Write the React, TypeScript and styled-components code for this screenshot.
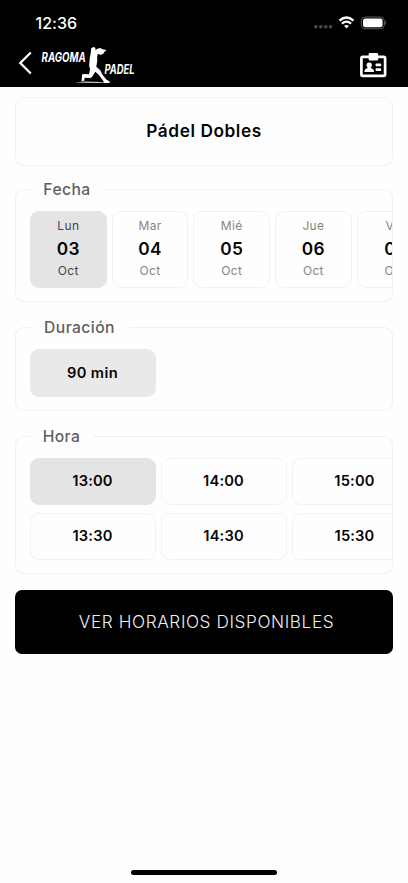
import React from "react";
import styled, { createGlobalStyle } from "styled-components";

const GlobalStyle = createGlobalStyle`
  * { box-sizing: border-box; }
  body { margin: 0; background: #fefefe; overflow: hidden; }
  button { font: inherit; color: inherit; }
`;

const Screen = styled.div`
  display: flex;
  flex-direction: column;
  width: 408px;
  height: 883px;
  background: #fefefe;
  font-family: Inter, "Open Sans", sans-serif;
  color: #050505;
  overflow: hidden;
`;

const Header = styled.header`
  height: 87px;
  flex: none;
  background: #000;
  color: #fff;
`;

const StatusBar = styled.div`
  display: flex;
  justify-content: space-between;
  align-items: center;
  height: 45px;
  padding: 0 22px 0 35.5px;
`;

const Clock = styled.span`
  font-size: 16px;
  font-weight: 500;
  line-height: 20px;
  letter-spacing: 0.05px;
`;

const NavBar = styled.nav`
  display: flex;
  align-items: flex-start;
  height: 42px;
`;

const IconButton = styled.button<{ $left: number; $top: number }>`
  display: flex;
  padding: 0;
  border: 0;
  background: none;
  margin-left: ${(p) => p.$left}px;
  margin-top: ${(p) => p.$top}px;
`;

const Brand = styled.svg`
  display: block;
  margin-left: 4px;
  overflow: visible;
`;

const Content = styled.main`
  display: flex;
  flex-direction: column;
  padding: 10px 15px 0;
`;

const Card = styled.section`
  border: 1px solid #f1f1f1;
  border-radius: 9px;
`;

const CourtCard = styled(Card)`
  display: flex;
  align-items: center;
  justify-content: center;
  height: 69px;
  padding-bottom: 2px;
  font-size: 17.3px;
  font-weight: 600;
  letter-spacing: 0.55px;
`;

const Group = styled(Card)<{ $gap: number; $height: number }>`
  height: ${(p) => p.$height}px;
  margin-top: ${(p) => p.$gap}px;
`;

const Legend = styled.h2<{ $width: number }>`
  width: ${(p) => p.$width}px;
  height: 24px;
  margin: -12px 0 9px 14px;
  background: #fefefe;
  text-align: center;
  font-size: 15.7px;
  font-weight: 500;
  line-height: 24px;
  letter-spacing: 0.4px;
  color: #606060;
`;

const Scroller = styled.div`
  overflow: hidden;
  padding-left: 14px;
`;

const Days = styled.div`
  display: flex;
  gap: 5px;
  width: max-content;
`;

const Day = styled.button<{ $selected?: boolean }>`
  display: flex;
  flex-direction: column;
  align-items: center;
  width: 76.7px;
  height: 77px;
  padding: 5px 0 0;
  border: 1px solid ${(p) => (p.$selected ? "#e4e4e4" : "#f1f1f1")};
  border-radius: 9px;
  background: ${(p) => (p.$selected ? "#e4e4e4" : "#fefefe")};
  color: ${(p) => (p.$selected ? "#444" : "#858585")};
`;

const DayText = styled.span`
  font-size: 12px;
  line-height: 18px;
  letter-spacing: 0.35px;
`;

const DayNumber = styled.strong`
  padding-top: 1px;
  font-size: 17.3px;
  font-weight: 600;
  line-height: 26px;
  letter-spacing: 0.4px;
  color: #050505;
`;

const Slots = styled.div`
  display: grid;
  grid-template-columns: repeat(3, 126px);
  gap: 8px 5px;
  width: max-content;
`;

const Slot = styled.button<{ $fill?: string; $height?: number }>`
  width: 126px;
  height: ${(p) => p.$height ?? 47}px;
  padding: 0 1px 2px 0;
  border: 1px solid ${(p) => p.$fill ?? "#f1f1f1"};
  border-radius: 9px;
  background: ${(p) => p.$fill ?? "#fefefe"};
  font-size: 14.7px;
  font-weight: 600;
  letter-spacing: 0.15px;
`;

const Duration = styled(Slot)`
  letter-spacing: 0.4px;
  padding-bottom: 1px;
`;

const Submit = styled.button`
  height: 64px;
  margin-top: 16px;
  padding: 0 0 1px 5px;
  border: 0;
  border-radius: 7px;
  background: #000;
  color: #eee;
  font-size: 17.2px;
  font-weight: 300;
  letter-spacing: 0.6px;
`;

const HomeIndicator = styled.div`
  width: 146px;
  height: 5px;
  flex: none;
  margin: auto auto 8px;
  border-radius: 3px;
  background: #000;
`;

const StatusIcons = () => (
  <svg width="76" height="20" viewBox="310 12.8 76 20" fill="#fff">
    <g fill="#4b4b4b">
      <circle cx="315.8" cy="26.6" r="1.8" />
      <circle cx="320.8" cy="26.6" r="1.8" />
      <circle cx="325.7" cy="26.6" r="1.8" />
      <circle cx="330.6" cy="26.6" r="1.8" />
    </g>
    <g fill="none" stroke="#fff" strokeWidth="2.3">
      <path d="M339.5 20.4Q346.5 14.2 353.5 20.4" />
      <path d="M341.9 23.4Q346.5 19.4 351.1 23.4" />
    </g>
    <path d="M344 25.6Q346.5 23.8 349 25.6L346.5 28.2Z" />
    <rect x="361.3" y="16.8" width="23" height="11.8" rx="3.8" fill="none" stroke="#5c5c5c" />
    <rect x="363" y="18.3" width="19.6" height="8.8" rx="2.2" />
    <path d="M385.2 20.9q1 .5 1 1.8t-1 1.8z" fill="#666" />
  </svg>
);

const BackIcon = () => (
  <svg width="16" height="24" viewBox="0 0 16 24" fill="none" stroke="#fff" strokeWidth="2.3">
    <path d="M12.8 1.5 2.3 12 12.8 22.5" />
  </svg>
);

const Logo = () => (
  <Brand width="100" height="42" viewBox="38 45 100 42" fill="#fff">
    <g fontFamily="Inter, sans-serif" fontStyle="italic" fontWeight="700" fontSize="13">
      <text x="41.6" y="61.6" textLength="44" lengthAdjust="spacingAndGlyphs">
        RAGOMA
      </text>
      <text x="104.6" y="74.3" textLength="30" lengthAdjust="spacingAndGlyphs">
        PADEL
      </text>
    </g>
    <path d="M91.2 48.2 93.4 47 95.3 47.8 95.6 50.2 97.3 48.7 100.3 48 102.4 49.2 106.6 50.1 104.7 51.5 103.5 53.6 100.8 55 97.8 53.8 97.2 56.4 97.2 61.2 96.3 66.7 100.3 70.3 102.3 74.4 106.3 79.4 109.6 81.6 109.6 83 104 83 103.2 80.7 98.7 74.8 95.3 71.8 91.9 77.3 89.8 78 84.7 77.8 84.2 80.7 81.6 81.3 82.1 74.4 84 74 89 74.3 90.1 69.3 89.1 65.7 89.8 57.4 90.7 53.6Z" />
    <path d="M74.5 82.2 86 81.5 108 82.2 98 83 83 82.8Z" opacity=".8" />
  </Brand>
);

const BadgeIcon = () => (
  <svg width="28" height="26" viewBox="359 52 28 26" fill="#fff">
    <rect x="361.4" y="56.8" width="23.7" height="19" rx="1.4" fill="none" stroke="#fff" strokeWidth="2.7" />
    <rect x="368.7" y="53" width="9.4" height="7.6" rx="1.3" />
    <circle cx="369.2" cy="65.1" r="2.7" />
    <path d="M367.6 66h3.2v2l2.4 1.2q.8.5.8 2.8h-9.6q0-2.3.8-2.8l2.4-1.2z" />
    <rect x="375.6" y="63.4" width="5.6" height="2.8" rx=".8" />
    <rect x="375.6" y="68.3" width="5.6" height="2.8" rx=".8" />
  </svg>
);

const days = [
  ["Lun", "03"],
  ["Mar", "04"],
  ["Mié", "05"],
  ["Jue", "06"],
  ["Vie", "07"],
];
const hours = ["13:00", "14:00", "15:00", "13:30", "14:30", "15:30"];

export default function App() {
  return (
    <>
      <GlobalStyle />
      <Screen>
        <Header>
          <StatusBar>
            <Clock>12:36</Clock>
            <StatusIcons />
          </StatusBar>
          <NavBar>
            <IconButton $left={18} $top={6} aria-label="Volver">
              <BackIcon />
            </IconButton>
            <Logo />
            <IconButton $left={221} $top={7} aria-label="Reservas">
              <BadgeIcon />
            </IconButton>
          </NavBar>
        </Header>
        <Content>
          <CourtCard>Pádel Dobles</CourtCard>
          <Group $gap={23} $height={113}>
            <Legend $width={74}>Fecha</Legend>
            <Scroller>
              <Days>
                {days.map(([name, number], i) => (
                  <Day key={name} $selected={i === 0}>
                    <DayText>{name}</DayText>
                    <DayNumber>{number}</DayNumber>
                    <DayText>Oct</DayText>
                  </Day>
                ))}
              </Days>
            </Scroller>
          </Group>
          <Group $gap={25} $height={84}>
            <Legend $width={99}>Duración</Legend>
            <Scroller>
              <Duration $fill="#e9e9e9" $height={48}>90 min</Duration>
            </Scroller>
          </Group>
          <Group $gap={25} $height={138}>
            <Legend $width={63}>Hora</Legend>
            <Scroller>
              <Slots>
                {hours.map((hour, i) => (
                  <Slot key={hour} $fill={i === 0 ? "#e4e4e4" : undefined}>
                    {hour}
                  </Slot>
                ))}
              </Slots>
            </Scroller>
          </Group>
          <Submit>VER HORARIOS DISPONIBLES</Submit>
        </Content>
        <HomeIndicator />
      </Screen>
    </>
  );
}
